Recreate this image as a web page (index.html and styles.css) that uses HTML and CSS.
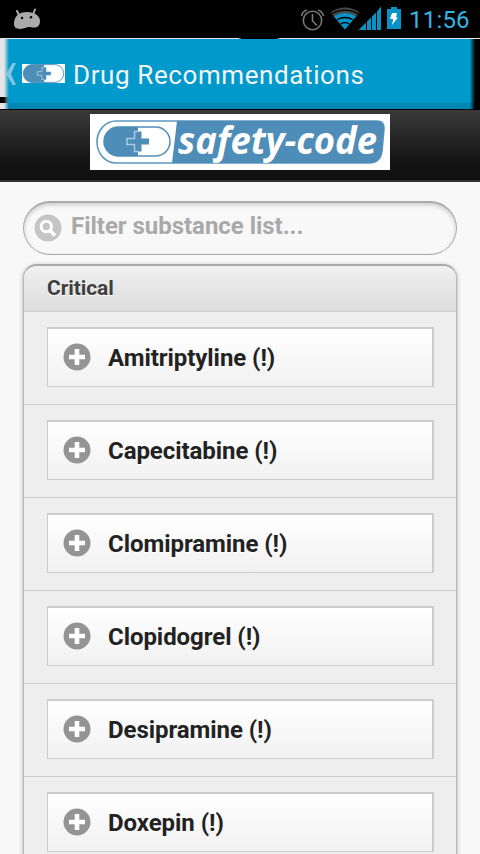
FILE: index.html
```
<!DOCTYPE html>
<html lang="en">
<head>
<meta charset="utf-8">
<title>Drug Recommendations</title>
<link rel="stylesheet" href="styles.css">
</head>
<body>
<svg class="defs" width="0" height="0" aria-hidden="true">
  <symbol id="plus" viewBox="0 0 28 28">
    <circle cx="14" cy="14" r="13.5" fill="#949494"/>
    <path d="M14 6v16M6 14h16" stroke="#fff" stroke-width="4.6"/>
  </symbol>
  <symbol id="pill" viewBox="0 0 68 31">
    <rect x="1" y="1" width="66" height="29" rx="14.5" fill="#fff" stroke="#508eb9" stroke-width="1.5"/>
    <path d="M35 1H15.500a14.500 14.500 0 0 0 0 29H35z" fill="#4e8db8"/>
    <path d="M31.500 5.500h7v7h7.500v6h-7.500v7h-7v-7H24v-6h7.500z" fill="#4e8db8"/>
    <path d="M35 5.500h-3.500v7H24v6h7.500v7H35" fill="none" stroke="#a9cbe1" stroke-width="1.500"/>
  </symbol>
</svg>
<div class="status">
  <svg class="droid" width="28" height="22" viewBox="0 0 28 22">
    <path d="M4 3l2 4M22 1.500l-2 5" stroke="#aaa" stroke-width="2" stroke-linecap="round"/>
    <path d="M1 16C1 8 6 4 14 4s13 4 13 9c0 5-3 7-7 6.500-3-.8-5-.8-8 .4C6 22 1 21 1 16z" fill="#aaa"/>
    <circle cx="9" cy="10" r="1.200"/><circle cx="18" cy="9.300" r="1.200"/>
  </svg>
  <svg class="tray" width="103" height="26" viewBox="300 6 103 26">
    <g fill="none" stroke="#777" stroke-width="1.600">
      <circle cx="312.500" cy="20.500" r="9.200"/>
      <path d="M312.500 14v7l4.500 4.500M301.500 16q1-4.500 5.500-6M323.500 16q-1-4.500-5.500-6"/>
    </g>
    <path d="M345 29.500L330.500 12.500Q345 2.500 359.500 12.500z" fill="#484848"/>
    <path d="M345 29.500L333.800 16.300Q345 9.500 356.200 16.300z" fill="#0793c5"/>
    <path d="M331 14.200q14-8 28 0M337 19.800q8-4.600 16 0M340.800 24q4.200-2.600 8.400 0" fill="none" stroke="#000" stroke-width="1.300"/>
    <path d="M358.500 30L366 22.500V30zM367 21.500l4-4V30h-4zM372 16.500l4-4V30h-4zM377 11.500l4-5V30h-4z" fill="#0793c5"/>
    <path d="M387 9h4V7h6v2h4v20h-14z" fill="#0793c5"/>
    <path d="M392 13h5l-1 4.500h2L392 25l1.200-6H390z" fill="#fff"/>
  </svg>
  <span class="clock">11:56</span>
</div>
<header class="appbar">
  <svg class="back" width="13" height="22" viewBox="0 0 13 22"><path d="M6.500 0H10L5 11l5 11H6.500L0 11z" fill="#7fc5e2"/></svg>
  <span class="appicon"><svg width="43" height="19"><use href="#pill"/></svg></span>
  <h1>Drug Recommendations</h1>
</header>
<div class="banner">
  <svg class="logo" width="300" height="56" viewBox="0 0 300 56">
    <rect width="300" height="56" fill="#fff"/>
    <path d="M26 7H287q7.500 0 7 8l-2 22q-1.500 12-13 12H26a19 21 0 0 1 0-42z" fill="#fff" stroke="#5d98c0" stroke-width="1.600"/>
    <path d="M87 7H287q7.500 0 7 8l-2 22q-1.500 12-13 12H82z" fill="#4e8db8"/>
    <use href="#pill" x="13" y="12" width="68" height="31"/>
    <text x="88" y="40" textLength="199" lengthAdjust="spacingAndGlyphs">safety-code</text>
  </svg>
</div>
<main>
  <div class="search">
    <svg width="28" height="28" viewBox="0 0 28 28"><circle cx="14" cy="14" r="13.500" fill="#c5c5c5"/><circle cx="12.300" cy="12.500" r="5.200" fill="none" stroke="#fff" stroke-width="3"/><path d="M16 16.500l5 5" stroke="#fff" stroke-width="3.500"/></svg>
    <span>Filter substance list...</span>
  </div>
  <section class="list">
    <h2>Critical</h2>
    <div class="row"><div class="item"><svg><use href="#plus"/></svg><span>Amitriptyline (!)</span></div></div>
    <div class="row"><div class="item"><svg><use href="#plus"/></svg><span>Capecitabine (!)</span></div></div>
    <div class="row"><div class="item"><svg><use href="#plus"/></svg><span>Clomipramine (!)</span></div></div>
    <div class="row"><div class="item"><svg><use href="#plus"/></svg><span>Clopidogrel (!)</span></div></div>
    <div class="row"><div class="item"><svg><use href="#plus"/></svg><span>Desipramine (!)</span></div></div>
    <div class="row"><div class="item"><svg><use href="#plus"/></svg><span>Doxepin (!)</span></div></div>
  </section>
</main>
</body>
</html>
```
FILE: styles.css
```
* { box-sizing: border-box; }
body { margin: 0; width: 480px; height: 854px; overflow: hidden; background: #f8f8f8; font-family: Roboto, sans-serif; display: flex; flex-direction: column; }
svg { display: block; flex: none; }
.defs { position: absolute; }
.status { flex: none; height: 38px; background: #000; display: flex; align-items: flex-start; padding: 6px 9px 0 13px; }
.droid { margin-top: 2px; }
.tray { margin-left: auto; }
.clock { width: 62px; margin-left: 6px; font-size: 24px; line-height: 28px; color: #33b5e5; white-space: nowrap; letter-spacing: .2px; }
.appbar {
  flex: none; height: 72px; display: flex; align-items: center; padding: 0 0 0 6px;
  border-bottom: 1px solid #000;
  background:
    linear-gradient(90deg, #e6e6e6 238px, #000 242px, #000 276px, #e6e6e6 281px) 0 0 / 100% 1px no-repeat,
    linear-gradient(90deg, #000 4px, rgba(0,0,0,0) 9px) 0 59px / 9px 6px no-repeat,
    linear-gradient(90deg, #e6e6e6 4px, rgba(230,230,230,0) 9px) 0 0 / 9px 100% no-repeat,
    linear-gradient(90deg, rgba(0,0,0,0), #000 5px) 100% 0 / 10px 100% no-repeat,
    linear-gradient(#0099cc 65px, #0086b3 65px);
}
.appicon { background: #fff; margin-left: 3px; }
h1 { margin: 2px 0 0 8px; font-size: 26px; line-height: 32px; font-weight: 400; color: #f3f3f3; white-space: nowrap; letter-spacing: .6px; }
.banner { flex: none; height: 72px; padding-top: 4px; display: flex; justify-content: center; background: linear-gradient(#3a3a3a, #111 80%); border-bottom: 2px solid #333; }
.logo text { font: italic 700 38px "Open Sans", sans-serif; fill: #fff; }
main { padding: 19px 23px 0; }
.search { height: 54px; border: 1px solid #aaa; border-top-width: 2px; border-radius: 27px; display: flex; align-items: center; padding: 0 0 1px 10px; box-shadow: inset 0 2px 4px rgba(0,0,0,.18); font-size: 24px; font-weight: 700; color: #a9a9a9; letter-spacing: -.03px; }
.search span { margin: -5px 0 0 9px; }
.list { margin-top: 9px; border: 1px solid #b8b8b8; border-top: 2px solid #aaa; border-radius: 14px 14px 0 0; background: #eee; box-shadow: 0 1px 4px rgba(0,0,0,.3); overflow: hidden; }
h2 { margin: 0; height: 45px; padding-left: 23px; font-size: 21px; line-height: 45px; font-weight: 700; color: #3e3e3e; background: linear-gradient(#f0f0f0, #ddd); text-shadow: 0 1px 0 #fff; letter-spacing: -.1px; }
.row { height: 93px; border-top: 1px solid #ccc; padding: 15px 22px 0 23px; }
.item { height: 60px; border: 1px solid #ccc; border-top-width: 2px; border-right-width: 2px; background: linear-gradient(#fff, #f1f1f1); display: flex; align-items: center; padding-left: 15px; font-size: 24px; font-weight: 700; color: #222; text-shadow: 0 1px 0 #fff; letter-spacing: -.06px; }
.item svg { width: 28px; height: 28px; margin-top: -2px; }
.item span { margin-left: 17px; }
```
